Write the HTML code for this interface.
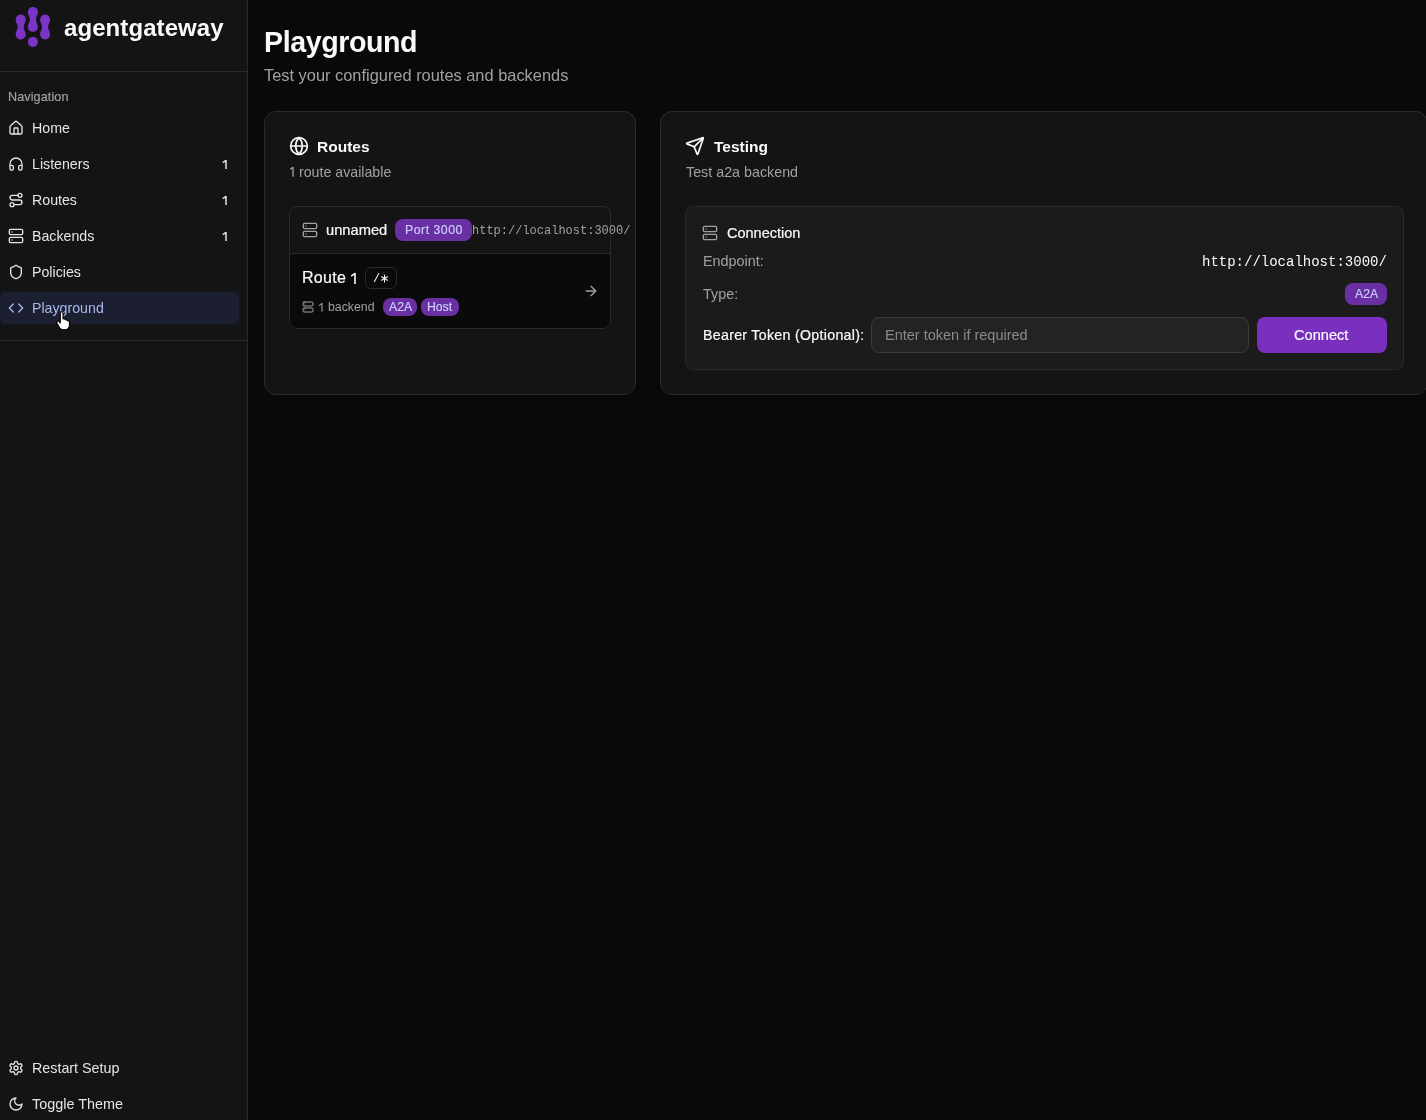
<!DOCTYPE html>
<html><head><meta charset="utf-8"><title>agentgateway - Playground</title>
<style>
html,body{margin:0;padding:0;}
body{width:1426px;height:1120px;overflow:hidden;position:relative;background:#090909;font-family:"Liberation Sans", sans-serif;}
.t{position:absolute;white-space:nowrap;line-height:1;will-change:transform;}
.i{position:absolute;display:block;}
.b{position:absolute;box-sizing:border-box;}
</style></head><body>
<div class="b" style="left:0px;top:0px;width:248px;height:1120px;background:#141414;border-right:1px solid #2a2a2a"></div>
<svg class="i" style="left:0px;top:0px" width="60" height="60" viewBox="0 0 60 60"><g fill="#7b34c6"><path d="M15.7 19.6 A5 5 0 0 1 25.7 19.6 C25.7 23.1 23.8 23.5 23.8 27.0 C23.8 30.5 25.7 30.9 25.7 34.4 A5 5 0 0 1 15.7 34.4 C15.7 30.9 17.599999999999998 30.5 17.599999999999998 27.0 C17.599999999999998 23.5 15.7 23.1 15.7 19.6 Z"/><path d="M40.1 19.6 A5 5 0 0 1 50.1 19.6 C50.1 23.1 48.2 23.5 48.2 27.0 C48.2 30.5 50.1 30.9 50.1 34.4 A5 5 0 0 1 40.1 34.4 C40.1 30.9 42.0 30.5 42.0 27.0 C42.0 23.5 40.1 23.1 40.1 19.6 Z"/><path d="M27.9 11.9 A5 5 0 0 1 37.9 11.9 C37.9 15.4 36.0 15.95 36.0 19.45 C36.0 22.95 37.9 23.5 37.9 27.0 A5 5 0 0 1 27.9 27.0 C27.9 23.5 29.799999999999997 22.95 29.799999999999997 19.45 C29.799999999999997 15.95 27.9 15.4 27.9 11.9 Z"/><circle cx="32.9" cy="41.9" r="5"/></g></svg>
<div class="t" style="left:63.8px;top:16.28px;font-size:24px;color:#fafafa;font-weight:700;letter-spacing:0.08px;">agentgateway</div>
<div class="b" style="left:0px;top:71px;width:247px;height:1px;background:#2a2a2a"></div>
<div class="t" style="left:8px;top:91.13px;font-size:12.6px;color:#a1a1a1;letter-spacing:0.1px;-webkit-text-stroke:0.2px currentColor;">Navigation</div>
<div class="b" style="left:0px;top:292px;width:239px;height:32px;background:#1b1f2f;border-radius:6px"></div>
<svg class="i" style="left:8px;top:120px" width="16" height="16" viewBox="0 0 24 24" fill="none" stroke="#e5e5e5" stroke-width="2" stroke-linecap="round" stroke-linejoin="round"><path d="M15 21v-8a1 1 0 0 0-1-1h-4a1 1 0 0 0-1 1v8"/><path d="M3 10a2 2 0 0 1 .709-1.528l7-5.999a2 2 0 0 1 2.582 0l7 5.999A2 2 0 0 1 21 10v9a2 2 0 0 1-2 2H5a2 2 0 0 1-2-2z"/></svg>
<div class="t" style="left:32px;top:121.08px;font-size:14.2px;color:#e5e5e5;">Home</div>
<svg class="i" style="left:8px;top:156px" width="16" height="16" viewBox="0 0 24 24" fill="none" stroke="#e5e5e5" stroke-width="2" stroke-linecap="round" stroke-linejoin="round"><path d="M3 14h3a2 2 0 0 1 2 2v3a2 2 0 0 1-2 2H5a2 2 0 0 1-2-2v-7a9 9 0 0 1 18 0v7a2 2 0 0 1-2 2h-1a2 2 0 0 1-2-2v-3a2 2 0 0 1 2-2h3"/></svg>
<div class="t" style="left:32px;top:157.08px;font-size:14.2px;color:#e5e5e5;">Listeners</div>
<svg class="i" style="left:220.05px;top:157.10px" width="10" height="14.90" viewBox="0 0 10 14.90" fill="none" stroke="#e5e5e5" stroke-width="1.5" stroke-linejoin="round"><path d="M2.80 5.60 L6 3.35 M6 3.00 V11.90"/></svg>
<svg class="i" style="left:8px;top:192px" width="16" height="16" viewBox="0 0 24 24" fill="none" stroke="#e5e5e5" stroke-width="2" stroke-linecap="round" stroke-linejoin="round"><circle cx="6" cy="19" r="3"/><path d="M9 19h8.5a3.5 3.5 0 0 0 0-7h-11a3.5 3.5 0 0 1 0-7H15"/><circle cx="18" cy="5" r="3"/></svg>
<div class="t" style="left:32px;top:193.08px;font-size:14.2px;color:#e5e5e5;">Routes</div>
<svg class="i" style="left:220.05px;top:193.10px" width="10" height="14.90" viewBox="0 0 10 14.90" fill="none" stroke="#e5e5e5" stroke-width="1.5" stroke-linejoin="round"><path d="M2.80 5.60 L6 3.35 M6 3.00 V11.90"/></svg>
<svg class="i" style="left:8px;top:228px" width="16" height="16" viewBox="0 0 24 24" fill="none" stroke="#e5e5e5" stroke-width="2" stroke-linecap="round" stroke-linejoin="round"><rect width="20" height="8" x="2" y="2" rx="2" ry="2"/><rect width="20" height="8" x="2" y="14" rx="2" ry="2"/><line x1="6" x2="6.01" y1="6" y2="6"/><line x1="6" x2="6.01" y1="18" y2="18"/></svg>
<div class="t" style="left:32px;top:229.08px;font-size:14.2px;color:#e5e5e5;">Backends</div>
<svg class="i" style="left:220.05px;top:229.10px" width="10" height="14.90" viewBox="0 0 10 14.90" fill="none" stroke="#e5e5e5" stroke-width="1.5" stroke-linejoin="round"><path d="M2.80 5.60 L6 3.35 M6 3.00 V11.90"/></svg>
<svg class="i" style="left:8px;top:264px" width="16" height="16" viewBox="0 0 24 24" fill="none" stroke="#e5e5e5" stroke-width="2" stroke-linecap="round" stroke-linejoin="round"><path d="M20 13c0 5-3.5 7.5-7.66 8.95a1 1 0 0 1-.67-.01C7.5 20.5 4 18 4 13V6a1 1 0 0 1 1-1c2 0 4.5-1.2 6.24-2.72a1.17 1.17 0 0 1 1.52 0C14.51 3.810 17 5 19 5a1 1 0 0 1 1 1z"/></svg>
<div class="t" style="left:32px;top:265.08px;font-size:14.2px;color:#e5e5e5;">Policies</div>
<svg class="i" style="left:8px;top:300px" width="16" height="16" viewBox="0 0 24 24" fill="none" stroke="#a8b8f0" stroke-width="2" stroke-linecap="round" stroke-linejoin="round"><polyline points="16 18 22 12 16 6"/><polyline points="8 6 2 12 8 18"/></svg>
<div class="t" style="left:32px;top:301.08px;font-size:14.2px;color:#a8b8f0;">Playground</div>
<div class="b" style="left:0px;top:340px;width:247px;height:1px;background:#2a2a2a"></div>
<svg class="i" style="left:8px;top:1060px" width="16" height="16" viewBox="0 0 24 24" fill="none" stroke="#e5e5e5" stroke-width="2" stroke-linecap="round" stroke-linejoin="round"><path d="M12.22 2h-.44a2 2 0 0 0-2 2v.18a2 2 0 0 1-1 1.73l-.43.25a2 2 0 0 1-2 0l-.15-.08a2 2 0 0 0-2.73.73l-.22.38a2 2 0 0 0 .73 2.730l.15.1a2 2 0 0 1 1 1.72v.51a2 2 0 0 1-1 1.74l-.15.09a2 2 0 0 0-.73 2.73l.22.38a2 2 0 0 0 2.73.73l.15-.08a2 2 0 0 1 2 0l.43.25a2 2 0 0 1 1 1.73V20a2 2 0 0 0 2 2h.44a2 2 0 0 0 2-2v-.18a2 2 0 0 1 1-1.73l.43-.25a2 2 0 0 1 2 0l.15.08a2 2 0 0 0 2.73-.73l.22-.39a2 2 0 0 0-.73-2.73l-.15-.08a2 2 0 0 1-1-1.74v-.5a2 2 0 0 1 1-1.74l.15-.09a2 2 0 0 0 .73-2.73l-.22-.38a2 2 0 0 0-2.73-.73l-.15.08a2 2 0 0 1-2 0l-.43-.25a2 2 0 0 1-1-1.73V4a2 2 0 0 0-2-2z"/><circle cx="12" cy="12" r="3"/></svg>
<div class="t" style="left:32px;top:1060.69px;font-size:14.3px;color:#e5e5e5;">Restart Setup</div>
<svg class="i" style="left:8px;top:1096px" width="16" height="16" viewBox="0 0 24 24" fill="none" stroke="#e5e5e5" stroke-width="2" stroke-linecap="round" stroke-linejoin="round"><path d="M12 3a6 6 0 0 0 9 9 9 9 0 1 1-9-9Z"/></svg>
<div class="t" style="left:32px;top:1096.71px;font-size:14.4px;color:#e5e5e5;">Toggle Theme</div>
<svg class="i" style="left:53.6px;top:309.5px" width="18" height="21.6" viewBox="0 0 20 24">
<path d="M7 3.5c0-1 .7-1.6 1.5-1.6S10 2.5 10 3.5V10l.6-.2c.8-.2 1.5.1 1.8.7l.2.4.5-.1c.8-.1 1.4.2 1.7.8l.2.4.4-.1c.9-.1 1.7.5 1.7 1.4v3.5c0 2.6-1.6 5.2-4.6 5.2h-2.3c-1.8 0-3.1-.9-4-2.3L3.3 14.6c-.5-.8-.3-1.7.4-2.1.7-.4 1.5-.2 2 .4L7 14.5z" fill="#fff" stroke="#000" stroke-width="1.2" stroke-linejoin="round"/>
</svg>
<div class="t" style="left:263.6px;top:27.98px;font-size:28.6px;color:#fafafa;font-weight:700;letter-spacing:-0.42px;">Playground</div>
<div class="t" style="left:264px;top:67.31px;font-size:16.4px;color:#a1a1a1;">Test your configured routes and backends</div>
<div class="b" style="left:264px;top:111px;width:372px;height:284px;background:#141414;border:1px solid #2a2a2a;border-radius:12px"></div>
<svg class="i" style="left:289px;top:136px" width="20" height="20" viewBox="0 0 24 24" fill="none" stroke="#fafafa" stroke-width="2" stroke-linecap="round" stroke-linejoin="round"><circle cx="12" cy="12" r="10"/><path d="M12 2a14.5 14.5 0 0 0 0 20 14.5 14.5 0 0 0 0-20"/><path d="M2 12h20"/></svg>
<div class="t" style="left:317px;top:138.88px;font-size:15.5px;color:#fafafa;font-weight:700;">Routes</div>
<div class="t" style="left:299.2px;top:164.78px;font-size:14.2px;color:#a1a1a1;">route available</div>
<svg class="i" style="left:287.00px;top:164.20px" width="10" height="15.80" viewBox="0 0 10 15.80" fill="none" stroke="#a1a1a1" stroke-width="1.35" stroke-linejoin="round"><path d="M3.30 5.30 L6 3.35 M6 3.00 V12.80"/></svg>
<div class="b" style="left:289px;top:206px;width:322px;height:123px;background:#141414;border:1px solid #2a2a2a;border-radius:8px;overflow:hidden"></div>
<div class="b" style="left:290px;top:253px;width:320px;height:75px;background:#0a0a0a;border-radius:0 0 7px 7px;border-top:1px solid #2a2a2a"></div>
<svg class="i" style="left:302px;top:222px" width="16" height="16" viewBox="0 0 24 24" fill="none" stroke="#a1a1a1" stroke-width="2" stroke-linecap="round" stroke-linejoin="round"><rect width="20" height="8" x="2" y="2" rx="2" ry="2"/><rect width="20" height="8" x="2" y="14" rx="2" ry="2"/><line x1="6" x2="6.01" y1="6" y2="6"/><line x1="6" x2="6.01" y1="18" y2="18"/></svg>
<div class="t" style="left:326px;top:223.05px;font-size:14.7px;color:#fafafa;-webkit-text-stroke:0.2px currentColor;">unnamed</div>
<div class="b" style="left:395px;top:219px;width:77px;height:22px;background:#6a2fa3;border-radius:8px"></div>
<div class="t" style="left:404.5px;top:223.99px;font-size:12.3px;color:#c9cdfb;letter-spacing:0.5px;-webkit-text-stroke:0.2px currentColor;">Port 3000</div>
<div class="t" style="left:472px;top:224.81px;font-size:12px;color:#a1a1a1;font-family:'Liberation Mono', monospace;">http://localhost:3000/</div>
<div class="t" style="left:301.6px;top:270.35px;font-size:16.0px;color:#fafafa;letter-spacing:0.3px;-webkit-text-stroke:0.2px currentColor;">Route</div>
<svg class="i" style="left:348.60px;top:269.80px" width="10" height="17.10" viewBox="0 0 10 17.10" fill="none" stroke="#fafafa" stroke-width="1.6" stroke-linejoin="round"><path d="M2.20 6.10 L6 3.35 M6 3.00 V14.10"/></svg>
<div class="b" style="left:365px;top:267px;width:32px;height:22px;border:1px solid #2a2a2a;border-radius:6px"></div>
<div class="t" style="left:373.2px;top:273.21px;font-size:12px;color:#fafafa;font-family:'Liberation Mono', monospace;">/</div>
<svg class="i" style="left:380px;top:274px" width="9" height="9" viewBox="0 0 9 9" stroke="#fafafa" stroke-width="1.1" stroke-linecap="round"><line x1="4.5" y1="1" x2="4.5" y2="8"/><line x1="1.5" y1="2.8" x2="7.5" y2="6.2"/><line x1="1.5" y1="6.2" x2="7.5" y2="2.8"/></svg>
<svg class="i" style="left:302px;top:301px" width="12" height="12" viewBox="0 0 24 24" fill="none" stroke="#a1a1a1" stroke-width="2" stroke-linecap="round" stroke-linejoin="round"><rect width="20" height="8" x="2" y="2" rx="2" ry="2"/><rect width="20" height="8" x="2" y="14" rx="2" ry="2"/><line x1="6" x2="6.01" y1="6" y2="6"/><line x1="6" x2="6.01" y1="18" y2="18"/></svg>
<div class="t" style="left:328.0px;top:300.99px;font-size:12.3px;color:#a1a1a1;">backend</div>
<svg class="i" style="left:315.60px;top:299.90px" width="10" height="14.60" viewBox="0 0 10 14.60" fill="none" stroke="#a1a1a1" stroke-width="1.15" stroke-linejoin="round"><path d="M3.00 5.60 L6 3.35 M6 3.00 V11.60"/></svg>
<div class="b" style="left:383px;top:298px;width:34px;height:18px;background:#6a2fa3;border-radius:8px"></div>
<div class="t" style="left:388.5px;top:301.17px;font-size:12.2px;color:#c9cdfb;-webkit-text-stroke:0.2px currentColor;">A2A</div>
<div class="b" style="left:421px;top:298px;width:38px;height:18px;background:#6a2fa3;border-radius:8px"></div>
<div class="t" style="left:426.5px;top:301.17px;font-size:12.2px;color:#c9cdfb;-webkit-text-stroke:0.2px currentColor;">Host</div>
<svg class="i" style="left:582.6px;top:283px" width="16" height="16" viewBox="0 0 24 24" fill="none" stroke="#a1a1a1" stroke-width="2" stroke-linecap="round" stroke-linejoin="round"><path d="M5 12h14"/><path d="m12 5 7 7-7 7"/></svg>
<div class="b" style="left:660px;top:111px;width:768px;height:284px;background:#141414;border:1px solid #2a2a2a;border-radius:12px"></div>
<svg class="i" style="left:685px;top:136px" width="20" height="20" viewBox="0 0 24 24" fill="none" stroke="#fafafa" stroke-width="2" stroke-linecap="round" stroke-linejoin="round"><path d="M14.536 21.686a.5.5 0 0 0 .937-.024l6.5-19a.496.496 0 0 0-.635-.635l-19 6.5a.5.5 0 0 0-.024.937l7.93 3.18a2 2 0 0 1 1.112 1.11z"/><path d="m21.854 2.147-10.94 10.939"/></svg>
<div class="t" style="left:714px;top:139.08px;font-size:15.5px;color:#fafafa;font-weight:700;">Testing</div>
<div class="t" style="left:686px;top:164.99px;font-size:14.3px;color:#a1a1a1;">Test a2a backend</div>
<div class="b" style="left:685px;top:206px;width:719px;height:164px;background:#1b1b1b;border:1px solid #2a2a2a;border-radius:8px"></div>
<svg class="i" style="left:702px;top:225px" width="16" height="16" viewBox="0 0 24 24" fill="none" stroke="#a1a1a1" stroke-width="2" stroke-linecap="round" stroke-linejoin="round"><rect width="20" height="8" x="2" y="2" rx="2" ry="2"/><rect width="20" height="8" x="2" y="14" rx="2" ry="2"/><line x1="6" x2="6.01" y1="6" y2="6"/><line x1="6" x2="6.01" y1="18" y2="18"/></svg>
<div class="t" style="left:727px;top:226.02px;font-size:14.5px;color:#fafafa;-webkit-text-stroke:0.2px currentColor;">Connection</div>
<div class="t" style="left:702.5px;top:254.11px;font-size:14.4px;color:#a1a1a1;">Endpoint:</div>
<div class="t" style="left:1201.5px;top:254.97px;font-size:14px;color:#fafafa;font-family:'Liberation Mono', monospace;">http://localhost:3000/</div>
<div class="t" style="left:702.5px;top:286.61px;font-size:14.4px;color:#a1a1a1;">Type:</div>
<div class="b" style="left:1345px;top:283px;width:42px;height:22px;background:#6a2fa3;border-radius:8px"></div>
<div class="t" style="left:1354.5px;top:288.17px;font-size:12.2px;color:#c9cdfb;-webkit-text-stroke:0.2px currentColor;">A2A</div>
<div class="t" style="left:702.5px;top:328.48px;font-size:14.2px;color:#fafafa;letter-spacing:0.3px;-webkit-text-stroke:0.2px currentColor;">Bearer Token (Optional):</div>
<div class="b" style="left:871px;top:317px;width:378px;height:36px;background:#232323;border:1px solid #3a3a3a;border-radius:8px"></div>
<div class="t" style="left:884.5px;top:328.42px;font-size:14.5px;color:#8a8a8a;">Enter token if required</div>
<div class="b" style="left:1257px;top:317px;width:130px;height:36px;background:#7b2fbf;border-radius:8px"></div>
<div class="t" style="left:1294px;top:328.34px;font-size:14.6px;color:#fafafa;-webkit-text-stroke:0.2px currentColor;">Connect</div>
</body></html>
